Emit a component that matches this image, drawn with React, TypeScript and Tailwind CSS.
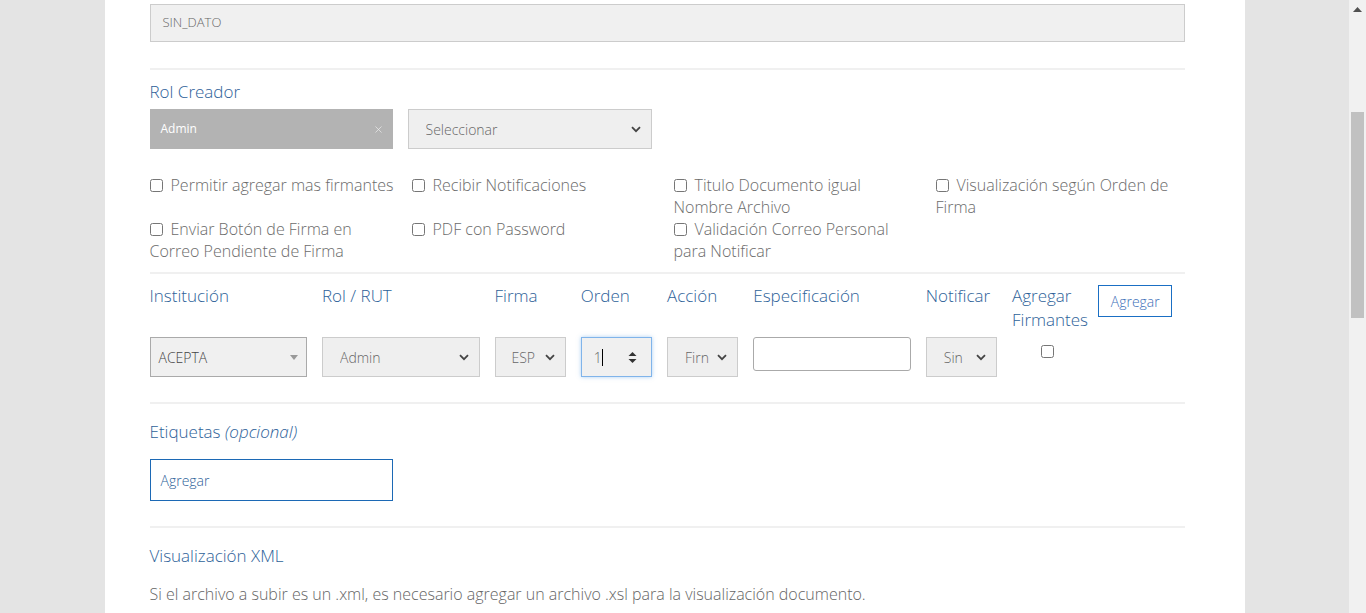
import { X } from 'lucide-react'

const label = 'text-[17px] leading-6 text-[#2e6299]'
const check = 'w-[13px] h-[13px] m-0 mr-[8px] align-[-1px] accent-[#555]'

function Chevron({ className = '' }: { className?: string }) {
  return (
    <svg width="10" height="7" viewBox="0 0 10 7" className={className}>
      <path d="M1 1.2 L5 5.2 L9 1.2" fill="none" stroke="#444" strokeWidth="1.8" />
    </svg>
  )
}

function FakeSelect({ value, width, pad = 'pl-[17px]' }: { value: string; width: string; pad?: string }) {
  return (
    <div
      className={`${width} h-[40px] flex items-center justify-between ${pad} pr-[10px] bg-[#efefef] border border-[#cccccc] text-[14px] text-[#666]`}
    >
      <span className="overflow-hidden whitespace-nowrap">{value}</span>
      <Chevron className="shrink-0" />
    </div>
  )
}

function CheckItem({ children }: { children: React.ReactNode }) {
  return (
    <div className="text-[16px] leading-[22px] text-[#6b6b6b]">
      <input type="checkbox" className={check} readOnly />
      {children}
    </div>
  )
}

function Divider() {
  return <div className="h-[2px] bg-[#f0f0f0]" />
}

export default function App() {
  return (
    <div className="flex h-[613px] overflow-hidden bg-[#e4e4e4] font-['Open_Sans',sans-serif] font-light">
      <div className="flex-1 flex justify-center">
        <div className="w-[1140px] bg-white pl-[45px] pr-[60px] pt-[4px]">
          {/* Campo previo */}
          <div className="h-[38px] flex items-center px-[12px] bg-[#f0f0f0] border border-[#cccccc] text-[13px] text-[#666]">
            SIN_DATO
          </div>

          <div className="mt-[26px]">
            <Divider />
          </div>

          {/* Rol creador */}
          <div className={`${label} mt-[10px]`}>Rol Creador</div>
          <div className="mt-[5px] flex gap-[15px]">
            <div className="w-[243px] h-[40px] flex items-center justify-between pl-[11px] pr-[9px] bg-[#b3b3b3] text-[12px] text-white font-normal">
              <span>Admin</span>
              <X size={11} strokeWidth={1.5} className="text-[#eee]" />
            </div>
            <FakeSelect value="Seleccionar" width="w-[244px]" />
          </div>

          {/* Opciones */}
          <div className="mt-[25px] grid grid-cols-[250px_250px_250px_1fr] gap-x-[12px]">
            <CheckItem>Permitir agregar mas firmantes</CheckItem>
            <CheckItem>Recibir Notificaciones</CheckItem>
            <CheckItem>
              Titulo Documento igual
              <br />
              Nombre Archivo
            </CheckItem>
            <CheckItem>
              Visualización según Orden de
              <br />
              Firma
            </CheckItem>
            <CheckItem>
              Enviar Botón de Firma en
              <br />
              Correo Pendiente de Firma
            </CheckItem>
            <CheckItem>PDF con Password</CheckItem>
            <CheckItem>
              Validación Correo Personal
              <br />
              para Notificar
            </CheckItem>
            <div />
          </div>

          <div className="mt-[10px]">
            <Divider />
          </div>

          {/* Firmantes */}
          <div className="mt-[10px] grid grid-cols-12 items-start">
            <div className={`col-span-2 pr-[15px] ${label}`}>Institución</div>
            <div className={`col-span-2 pr-[15px] ${label}`}>Rol / RUT</div>
            <div className={`col-span-1 pr-[15px] ${label}`}>Firma</div>
            <div className={`col-span-1 pr-[15px] ${label}`}>Orden</div>
            <div className={`col-span-1 pr-[15px] ${label}`}>Acción</div>
            <div className={`col-span-2 pr-[15px] ${label}`}>Especificación</div>
            <div className={`col-span-1 pr-[15px] ${label}`}>Notificar</div>
            <div className={`col-span-1 pr-[15px] ${label}`}>
              Agregar
              <br />
              Firmantes
            </div>
            <div className="col-span-1 pt-px">
              <button className="w-[74px] h-[32px] border border-[#1a6fc4] text-[14px] text-[#3d6fb8] bg-white">
                Agregar
              </button>
            </div>

            <div className="col-span-2 pr-[15px] mt-[5px]">
              <div className="h-[40px] flex items-center justify-between pl-[8px] pr-[8px] bg-[#f0f0f0] border border-[#aaaaaa] text-[14px] text-[#444]">
                <span>ACEPTA</span>
                <svg width="8" height="5" viewBox="0 0 8 5">
                  <path d="M0 0 L8 0 L4 5 Z" fill="#999" />
                </svg>
              </div>
            </div>
            <div className="col-span-2 pr-[15px] mt-[5px]">
              <FakeSelect value="Admin" width="w-full" />
            </div>
            <div className="col-span-1 pr-[15px] mt-[5px]">
              <FakeSelect value="ESP" width="w-full" pad="pl-[16px]" />
            </div>
            <div className="col-span-1 pr-[15px] mt-[5px]">
              <div className="h-[40px] flex items-center justify-between pl-[12px] pr-[14px] bg-[#f0f0f0] border border-[#80b4ea] shadow-[0_0_4px_rgba(90,160,230,0.5)] text-[14px] text-[#666]">
                <span className="flex items-center">
                  1<span className="inline-block w-px h-[17px] bg-black" />
                </span>
                <svg width="9" height="13" viewBox="0 0 9 13">
                  <path d="M0.5 5 L4.5 1 L8.5 5 Z" fill="#333" />
                  <path d="M0.5 8 L4.5 12 L8.5 8 Z" fill="#333" />
                </svg>
              </div>
            </div>
            <div className="col-span-1 pr-[15px] mt-[5px]">
              <FakeSelect value="Firn" width="w-full" />
            </div>
            <div className="col-span-2 pr-[15px] mt-[5px]">
              <input
                className="w-full h-[34px] rounded-[3px] border border-[#aaaaaa] bg-white outline-none"
                readOnly
              />
            </div>
            <div className="col-span-1 pr-[15px] mt-[5px]">
              <FakeSelect value="Sin" width="w-full" />
            </div>
            <div className="col-span-1 pr-[15px] mt-[5px] flex justify-center pt-[8px]">
              <input type="checkbox" className="w-[13px] h-[13px] m-0" readOnly />
            </div>
            <div />
          </div>

          <div className="mt-[25px]">
            <Divider />
          </div>

          {/* Etiquetas */}
          <div className={`${label} mt-[16px]`}>
            Etiquetas <em className="italic">(opcional)</em>
          </div>
          <div className="mt-[15px] w-[243px] h-[42px] flex items-center px-[10px] border border-[#1c69b5] text-[14px] text-[#2e6299]">
            Agregar
          </div>

          <div className="mt-[25px]">
            <Divider />
          </div>

          {/* Visualización */}
          <div className={`${label} mt-[16px]`}>Visualización XML</div>
          <p className="mt-[14px] text-[16px] leading-6 text-[#666]">
            Si el archivo a subir es un .xml, es necesario agregar un archivo .xsl para la visualización documento.
          </p>
        </div>
      </div>

      {/* Barra de desplazamiento */}
      <div className="w-[17px] bg-[#f1f1f1] flex flex-col items-center">
        <svg width="9" height="5" viewBox="0 0 9 5" className="mt-[7px]">
          <path d="M0 5 L4.5 0 L9 5 Z" fill="#505050" />
        </svg>
        <div className="mt-[100px] w-[13px] h-[206px] bg-[#c1c1c1]" />
      </div>
    </div>
  )
}
